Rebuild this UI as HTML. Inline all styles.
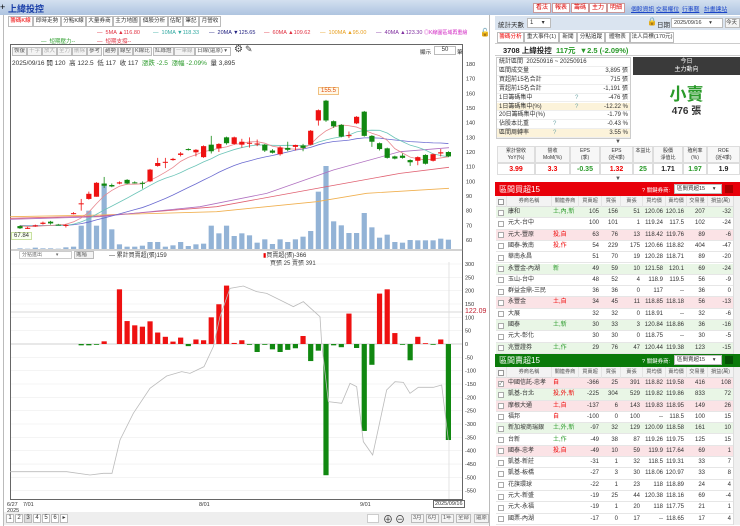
<!DOCTYPE html>
<html><head><meta charset="utf-8">
<style>
*{margin:0;padding:0;box-sizing:border-box}
body{width:740px;height:526px;overflow:hidden;background:#fff;font-family:"Liberation Sans","Noto Sans CJK TC",sans-serif;font-size:7px;color:#333;position:relative}
.a{position:absolute;white-space:nowrap}
.tab{position:absolute;top:16px;height:11px;border:1px solid #bbb;background:#fff;font-size:5.6px;line-height:9px;padding:0;color:#333;text-align:center;white-space:nowrap;overflow:hidden}
.btn{position:absolute;height:9px;border:1px solid #bbb;background:#f4f4f4;font-size:5.5px;line-height:7px;padding:0 1px;color:#555;white-space:nowrap;overflow:hidden}
.rb{position:absolute;top:3px;height:10px;border:1px solid #c99;background:#fff;color:#d00;font-size:6px;line-height:8px;padding:0 2px}
.lk{position:absolute;top:4px;color:#1a44c8;text-decoration:underline;font-size:5.8px;white-space:nowrap}
.cell{position:absolute;font-size:6px;line-height:11px;height:11px;white-space:nowrap;overflow:hidden}
</style></head><body>
<div class="a" style="left:0;top:0;width:740px;height:15px;background:linear-gradient(#d3e0f0,#aec4e0)"></div>
<div class="a" style="left:0;top:2px;font-size:9px;color:#000">+</div>
<div class="a" style="left:8px;top:2px;font-size:9px;color:#1a3fa8;font-weight:bold">上緯投控</div>
<div class="a" style="left:3px;top:15px;width:1px;height:511px;background:#bbb"></div>
<div class="a" style="left:489px;top:15px;width:1px;height:511px;background:#bbb"></div>
<div class="tab" style="left:8px;width:25px;color:#e00">籌碼K線</div>
<div class="tab" style="left:33px;width:28px">即時走勢</div>
<div class="tab" style="left:61px;width:25px">分點K線</div>
<div class="tab" style="left:86px;width:27px">大量券商</div>
<div class="tab" style="left:113px;width:27px">主力地圖</div>
<div class="tab" style="left:140px;width:28px">個股分析</div>
<div class="tab" style="left:168px;width:15px">估配</div>
<div class="tab" style="left:183px;width:16px">筆記</div>
<div class="tab" style="left:199px;width:22px">月營收</div>
<div class="a" style="left:97px;top:30px;font-size:5.5px;color:#e03040">— &nbsp;5MA ▲116.80</div>
<div class="a" style="left:153px;top:30px;font-size:5.5px;color:#30a8a0">— &nbsp;10MA ▼118.33</div>
<div class="a" style="left:209px;top:30px;font-size:5.5px;color:#202080">— &nbsp;20MA ▼125.65</div>
<div class="a" style="left:264px;top:30px;font-size:5.5px;color:#e03040">— &nbsp;60MA ▲109.62</div>
<div class="a" style="left:320px;top:30px;font-size:5.5px;color:#e8a020">— &nbsp;100MA ▲95.00</div>
<div class="a" style="left:376px;top:30px;font-size:5.5px;color:#8030a0">— &nbsp;40MA ▲123.30</div>
<div class="a" style="left:424px;top:29px;font-size:5px;color:#d020c0">◎K線圖區域再重繪</div>
<div class="a" style="left:480px;top:28px;font-size:8px;color:#000">🔓</div>
<div class="a" style="left:41px;top:37px;font-size:5.5px;color:#30a030">— &nbsp;短期壓力--</div>
<div class="a" style="left:97px;top:37px;font-size:5.5px;color:#e03040">— &nbsp;短期支撐--</div>
<div class="a" style="left:10px;top:44px;width:453px;height:456px;border:1px solid #666"></div>
<div class="btn" style="left:12px;top:47px">恢復</div>
<div class="btn" style="left:27px;top:47px;color:#aaa">十字</div>
<div class="btn" style="left:42px;top:47px;color:#aaa">放大</div>
<div class="btn" style="left:57px;top:47px;color:#aaa">全力</div>
<div class="btn" style="left:72px;top:47px;color:#aaa">刪除</div>
<div class="btn" style="left:87px;top:47px">參考</div>
<div class="btn" style="left:103px;top:47px">趨勢</div>
<div class="btn" style="left:118px;top:47px">線型</div>
<div class="btn" style="left:133px;top:47px">K線比</div>
<div class="btn" style="left:153px;top:47px">紅綠燈</div>
<div class="btn" style="left:174px;top:47px;color:#aaa">一筆線</div>
<div class="btn" style="left:195px;top:47px;width:36px;background:#fff">日線(還原) ▾</div>
<div class="a" style="left:234px;top:44px;font-size:10px;color:#444">⚙</div>
<div class="a" style="left:245px;top:44px;font-size:9px;color:#444">✎</div>
<div class="a" style="left:420px;top:48px;font-size:5.5px">顯示</div>
<div class="a" style="left:434px;top:46px;width:22px;height:9px;border:1px solid #bbb;font-size:6px;text-align:center;line-height:7px">50</div>
<div class="a" style="left:457px;top:48px;font-size:5.5px">筆</div>
<div class="a" style="left:12px;top:57px;font-size:6.5px;color:#333">2025/09/16 開 120 &nbsp;高 122.5 &nbsp;低 117 &nbsp;收 117 &nbsp;<span style="color:#2a9a2a">漲跌 -2.5 &nbsp;漲幅 -2.09%</span> &nbsp;量 3,895</div>
<div class="a" style="left:318px;top:87px;border:1px solid #f0c080;background:#fff8e8;color:#e05010;font-size:6px;padding:0 2px">155.5</div>
<div class="a" style="left:11px;top:232px;border:1px solid #c8e0a0;background:#f8fff0;color:#333;font-size:6px;padding:0 2px">67.84</div>
<div class="a" style="left:19px;top:251px;width:53px;height:8px;border:1px solid #ccc;font-size:5px;line-height:6px;color:#666;padding-left:2px;overflow:hidden">分點進出 &nbsp; &nbsp; &nbsp; &nbsp; &nbsp;▾</div>
<div class="btn" style="left:74px;top:251px;width:20px;height:8px">進階</div>
<div class="a" style="left:109px;top:250px;font-size:6px">— 累計買賣超(張)159</div>
<div class="a" style="left:263px;top:250px;font-size:6px"><span style="color:#e00">▮</span>買賣超(張)-366</div>
<div class="a" style="left:270px;top:258px;font-size:6px">買張 25 賣張 391</div>
<div class="a" style="left:465px;top:308px;font-size:7px;color:#c02030">122.09</div>
<div class="a" style="left:7px;top:502px;font-size:5.5px">6/27</div>
<div class="a" style="left:7px;top:508px;font-size:5.5px">2025</div>
<div class="a" style="left:23px;top:502px;font-size:5.5px">7/01</div>
<div class="a" style="left:199px;top:502px;font-size:5.5px">8/01</div>
<div class="a" style="left:360px;top:502px;font-size:5.5px">9/01</div>
<div class="a" style="left:433px;top:500px;font-size:5.5px;border:1px solid #666;background:#fff;padding:0 1px">2025/09/16</div>
<div class="a" style="left:4px;top:512px;width:485px;height:13px;background:#eee"></div>
<div id="pg"></div>
<div class="a" style="left:367px;top:514px;width:12px;height:9px;background:#fff;border:1px solid #ccc"></div>
<div class="a" style="left:383px;top:511px;font-size:10px;color:#333">⊕</div>
<div class="a" style="left:395px;top:511px;font-size:10px;color:#333">⊖</div>
<div class="btn" style="left:411px;top:514px">3月</div>
<div class="btn" style="left:426px;top:514px">6月</div>
<div class="btn" style="left:441px;top:514px">1年</div>
<div class="btn" style="left:456px;top:514px">全部</div>
<div class="btn" style="left:474px;top:514px">還原</div>
<svg id="ch" class="a" style="left:0;top:0" width="490" height="526"></svg>

<div class="rb" style="left:533px">看法</div>
<div class="rb" style="left:552px">報表</div>
<div class="rb" style="left:571px">籌碼</div>
<div class="rb" style="left:589px">主力</div>
<div class="rb" style="left:607px">明細</div>
<div class="lk" style="left:631px">個股資訊</div>
<div class="lk" style="left:656px">交易權位</div>
<div class="lk" style="left:682px">行事曆</div>
<div class="lk" style="left:704px">計畫達站</div>
<div class="a" style="left:495px;top:16px;width:245px;height:14px;background:#dae4f0"></div>
<div class="a" style="left:498px;top:19px;font-size:6.5px">統計天數</div>
<div class="a" style="left:527px;top:18px;width:24px;height:10px;background:#fff;border:1px solid #bbb;font-size:6px;padding-left:2px">1 &nbsp; &nbsp; ▾</div>
<div class="a" style="left:647px;top:17px;font-size:8px">🔒</div>
<div class="a" style="left:657px;top:19px;font-size:6.5px">日期</div>
<div class="a" style="left:671px;top:18px;width:52px;height:10px;background:#fff;border:1px solid #bbb;font-size:5.5px;padding-left:2px;line-height:8px;overflow:hidden">2025/09/16 &nbsp; &nbsp; ▾</div>
<div class="a" style="left:725px;top:18px;width:15px;height:10px;background:#f4f4f4;border:1px solid #bbb;font-size:5.5px;line-height:8px">今天</div>
<div class="tab" style="left:497px;top:32px;width:27px;color:#e00">籌碼分析</div>
<div class="tab" style="left:524px;top:32px;width:35px">重大事件(1)</div>
<div class="tab" style="left:559px;top:32px;width:18px">新聞</div>
<div class="tab" style="left:577px;top:32px;width:28px">分點追蹤</div>
<div class="tab" style="left:605px;top:32px;width:25px">體物表</div>
<div class="tab" style="left:630px;top:32px;width:44px">法人目標(170元)</div>
<div class="a" style="left:495px;top:43px;width:245px;height:13px;border-top:1px solid #ccc;border-bottom:1px solid #ccc"></div>
<div class="a" style="left:503px;top:45px;font-size:7.5px;font-weight:bold;color:#222">3708 上緯投控 &nbsp;<span style="color:#2a9a2a">117元 &nbsp;▼2.5 (-2.09%)</span></div>
<div class="a" style="left:496px;top:57px;width:135px;height:82px;border:1px solid #ccc"></div>
<div id="st"></div>
<div class="a" style="left:633px;top:57px;width:107px;height:18px;background:#3a3a3a;color:#fff;font-size:6px;text-align:center;line-height:8px;padding-top:1px">今日<br>主力動向</div>
<div class="a" style="left:633px;top:80px;width:107px;text-align:center;font-size:17px;color:#2a9a2a;font-weight:bold">小賣</div>
<div class="a" style="left:633px;top:102px;width:107px;text-align:center;font-size:10px;color:#333;font-weight:bold">476 張</div>
<div class="a" style="left:615px;top:139px;font-size:6px;color:#555">▼</div>
<div id="mt"></div>
<div class="a" style="left:615px;top:176px;font-size:6px;color:#555">▼</div>
<div class="a" style="left:495px;top:182px;width:245px;height:14px;background:#e8000a"></div>
<div class="a" style="left:499px;top:184px;font-size:8px;color:#fff">區間買超15</div>
<div class="a" style="left:642px;top:186px;font-size:5.5px;color:#fff">? 關鍵券商:</div>
<div class="a" style="left:674px;top:184px;width:48px;height:10px;background:#fff;border:1px solid #bbb;font-size:5.5px;line-height:8px;padding-left:2px;overflow:hidden">區間買超15 &nbsp; &nbsp; ▾</div>
<div class="a" style="left:725px;top:185px;width:8px;height:8px;background:#a00"></div>
<div class="a" style="left:495px;top:354px;width:245px;height:13px;background:#0a7a0a"></div>
<div class="a" style="left:499px;top:355px;font-size:8px;color:#fff">區間賣超15</div>
<div class="a" style="left:642px;top:357px;font-size:5.5px;color:#fff">? 關鍵券商:</div>
<div class="a" style="left:674px;top:355px;width:48px;height:10px;background:#fff;border:1px solid #bbb;font-size:5.5px;line-height:8px;padding-left:2px;overflow:hidden">區間賣超15 &nbsp; &nbsp; ▾</div>
<div class="a" style="left:725px;top:356px;width:8px;height:8px;background:#065006"></div>
<div id="tb"></div>
<script>
const NS="http://www.w3.org/2000/svg",svg=document.getElementById('ch');
function el(t,a){const e=document.createElementNS(NS,t);for(const k in a)e.setAttribute(k,a[k]);svg.appendChild(e);return e}
function tx(x,y,s,c,sz){const e=el('text',{x:x,y:y,fill:c||'#333','font-size':sz||5.5,'font-family':'Liberation Sans'});e.textContent=s}
const py=p=>64+(180-p)*1.4667, xi=i=>20+i*7.65;
for(let p=180;p>=60;p-=10)tx(466,py(p)+2,p);
el('line',{x1:10,y1:250,x2:463,y2:250,stroke:'#888','stroke-width':0.8});
const C=[[69.5,68,70,67.5],[68,68.3,69,67.5],[69.5,70,70.5,69],[71,71.8,72.5,70.5],[72.5,71.3,73,70.5],[70.5,70.3,71,70],[70,70.3,71,68.5],[78,78.3,79,77.5],[84.5,85,88,80],[88,91.5,93,87.5],[89.5,99,99.5,89.5],[98.5,97,103,95.5],[97.5,96.5,98.5,96],[98.5,99.3,100,98],[101,98.5,101.5,98],[99.3,99,100,98.5],[99,98.3,100,95],[100,108,108.5,99.5],[110.5,112.5,116,110],[112.8,113.3,116,109],[114.5,115.3,116,114],[118,119,120,117],[122,121.5,122.5,121],[119.8,121.5,122,117],[116.5,124,124.5,116],[125,120.5,131,119],[122.5,125.5,126,120],[130,126,130.5,125],[125.5,130,130.5,125],[125,127,129,123],[126,126.3,130,123],[125.5,125.8,128.5,124],[125,121,125.5,120],[121,119.5,122,119],[118.5,123,124,117.5],[122.8,121.5,127,120.5],[123.5,124.8,125,121],[124.5,122.8,125.5,120.5],[125,134.5,135,124.5],[141.5,148.5,149,138],[155,141.5,155.5,140.5],[141,137.5,141.5,136.5],[138.5,130.5,139,130],[131,131.5,134,129.5],[139.5,144,144.5,139],[147.5,131,148,130.5],[131,127,131.5,123.5],[126,122,126.5,121],[122.5,116,123,115.5],[117,115.5,117.5,115],[117.5,116,119,115.5],[114.5,113,115,110.5],[114,116.5,117,111],[118,112,118.5,111.5],[114,118.5,119,113.5],[119,119.8,122,117],[120,117,120.5,116.5]];
const V=[565,566,563,565,565,566,562,560,497,452,497,372,508,553,560,560,557,546,546,560,556,546,558,553,551,497,520,497,528,520,526,548,538,552,538,546,538,530,513,395,318,484,496,519,519,459,502,533,524,546,548,540,541,541,541,536,539];
V.forEach((v,i)=>{const t=60+v/3;el('rect',{x:xi(i)-2.6,y:t,width:5.2,height:249-t,fill:'#93b3d6'})});
function pl(pts,c){el('polyline',{points:pts.map(p=>(p[0]/3)+','+(60+p[1]/3)).join(' '),fill:'none',stroke:c,'stroke-width':0.8})}
pl([[30,470],[300,465],[650,455],[950,425],[1100,400],[1347,385]],'#f0b050');
pl([[30,475],[300,468],[650,440],[980,380],[1200,340],[1347,322]],'#e06070');
pl([[30,478],[300,470],[600,440],[800,400],[1000,330],[1200,275],[1347,263]],'#b070c0');
const cl=C.map(c=>c[1]),pad=Array(25).fill(70);
function ma(n,c){const a=pad.concat(cl);const pts=[];for(let i=0;i<cl.length;i++){let s=0;for(let j=0;j<n;j++)s+=a[25+i-j];pts.push(xi(i)+','+py(s/n))}el('polyline',{points:pts.join(' '),fill:'none',stroke:c,'stroke-width':0.8})}
ma(20,'#6a6ad0');ma(10,'#6cc4b8');ma(5,'#e8888f');
C.forEach((c,i)=>{const x=xi(i),up=c[1]>=c[0],col=up?'#ee1111':'#118811';el('line',{x1:x,x2:x,y1:py(c[2]),y2:py(c[3]),stroke:col,'stroke-width':0.8});const t=py(Math.max(c[0],c[1])),b=py(Math.min(c[0],c[1]));el('rect',{x:x-2.6,y:t,width:5.2,height:Math.max(b-t,1),fill:col})});
for(let v=300;v>=-550;v-=50){const y=344-v*0.2667;el('line',{x1:11,x2:462,y1:y,y2:y,stroke:'#eee','stroke-width':0.6});tx(465,y+2,v)}
el('line',{x1:11,x2:462,y1:344,y2:344,stroke:'#aaa','stroke-width':0.6});
el('line',{x1:11,x2:462,y1:312,y2:312,stroke:'#ccc','stroke-width':0.8});
el('line',{x1:449,x2:449,y1:262,y2:499,stroke:'#ddd','stroke-width':0.8});
const L=[0,0,0,0,0,0,0,0,-5,-5,-2,10,0,205,86,70,65,85,43,27,9,24,-8,17,14,100,149,219,4,14,-1,-30,-1,-20,-30,-22,-16,30,-64,-25,-492,-5,-12,114,-15,-326,-78,189,205,41,-2,-61,27,3,-1,17,-360];
L.forEach((v,i)=>{if(!v)return;const h=Math.abs(v)*0.2667;el('rect',{x:xi(i)-2.6,y:v>0?344-h:344,width:5.2,height:Math.max(h,0.8),fill:v>0?'#ee1111':'#118811'})});
const G=[[30,665],[200,665],[270,675],[310,670],[336,670],[360,570],[400,490],[450,415],[500,378],[545,365],[570,370],[612,350],[640,290],[660,200],[690,115],[730,108],[770,125],[800,130],[850,155],[880,170],[910,155],[960,200],[965,280],[985,455],[1025,460],[1050,400],[1070,410],[1090,575],[1118,615],[1160,420],[1185,395],[1210,397],[1230,430],[1255,412],[1300,412],[1325,405],[1345,570]];
el('polyline',{points:G.map(p=>(p[0]/3)+','+(250+p[1]/3)).join(' '),fill:'none',stroke:'#bbb','stroke-width':0.8});
let h='';['1','2','3','4','5','6','▸'].forEach((s,i)=>{h+=`<div class="a" style="left:${6+i*9}px;top:514px;width:8px;height:9px;border:1px solid #bbb;background:${i==2?'#ddd':'#fff'};font-size:6px;text-align:center;line-height:7px">${s}</div>`});
document.getElementById('pg').innerHTML=h;
const S=[['統計區間 &nbsp;20250916 ~ 20250916','',''],['區間成交量','','3,895 張'],['買超前15名合計','','715 張'],['賣超前15名合計','','-1,191 張'],['1日籌碼集中','?','-476 張'],['1日籌碼集中(%)','?','-12.22 %'],['20日籌碼集中(%)','','-1.79 %'],['佔股本比重','?','-0.43 %'],['區間周轉率','?','3.55 %']];
h='';S.forEach((r,i)=>{const y=58+i*8.9,bg=(i==5||i==8)?'#fcf3da':'#fff';h+=`<div class="a" style="left:497px;top:${y}px;width:133px;height:8.9px;background:${bg};border-bottom:1px solid #eee"></div><div class="a" style="left:499px;top:${y}px;font-size:6px;line-height:9px">${r[0]}</div><div class="a" style="left:${i==5||i==4?575:553}px;top:${y}px;font-size:6px;line-height:9px;color:#7aa">${r[1]}</div><div class="a" style="left:580px;width:48px;text-align:right;top:${y}px;font-size:6px;line-height:9px">${r[2]}</div>`});
document.getElementById('st').innerHTML=h;
const MX=[497,535,570,600,633,653,683,707,740],MH=['累計營收<br>YoY(%)','營收<br>MoM(%)','EPS<br>(季)','EPS<br>(近4季)','本益比','股價<br>淨值比','殖利率<br>(%)','ROE<br>(近4季)'],MV=[['3.99','#e00'],['3.3','#e00'],['-0.35','#2a9a2a'],['1.32','#e00'],['25','#2a9a2a'],['1.71','#222'],['1.97','#2a9a2a'],['1.9','#222']];
h='';for(let i=0;i<8;i++){const w=MX[i+1]-MX[i];h+=`<div class="a" style="left:${MX[i]}px;top:146px;width:${w}px;height:17px;border:1px solid #ddd;background:#f7f7f7;font-size:5px;line-height:7px;text-align:center;padding-top:1px">${MH[i]}</div><div class="a" style="left:${MX[i]}px;top:163px;width:${w}px;height:12px;border:1px solid #ddd;font-size:7px;font-weight:bold;line-height:11px;text-align:center;color:${MV[i][1]}">${MV[i][0]}</div>`}
document.getElementById('mt').innerHTML=h;
const CX=[497,506,551,578,601,620,642,665,686,707,733],HD=['','券商名稱','關連券商','買賣超','買張','賣張','買均價','賣均價','交易量','損益(萬)'];
const T1=[['康和','土,內,新',105,156,51,'120.06','120.16',207,-32,'g'],['元大-台中','',100,101,1,'119.24','117.5',102,-24,'w'],['元大-豐原','投,自',63,76,13,'118.42','119.76',89,-6,'p'],['國泰-敦南','投,作',54,229,175,'120.66','118.82',404,-47,'w'],['華南永昌','',51,70,19,'120.28','118.71',89,-20,'w'],['永豐金-內湖','新',49,59,10,'121.58','120.1',69,-24,'g'],['玉山-台中','',48,52,4,'118.9','119.5',56,-9,'w'],['群益金鼎-三民','',36,36,0,'117','--',36,0,'w'],['永豐金','土,自',34,45,11,'118.85','118.18',56,-13,'p'],['大展','',32,32,0,'118.91','--',32,-6,'w'],['國泰','土,新',30,33,3,'120.84','118.86',36,-16,'g'],['元大-彰化','',30,30,0,'118.75','--',30,-5,'w'],['兆豐證券','土,作',29,76,47,'120.44','119.38',123,-15,'g']];
const T2=[['中國信託-忠孝','自',-366,25,391,'118.82','119.58',416,108,'p'],['凱基-台北','投,外,新',-225,304,529,'119.82','119.86',833,72,'g'],['摩根大通','土,自',-137,6,143,'119.83','118.95',149,26,'p'],['福邦','自',-100,0,100,'--','118.5',100,15,'w'],['新加坡商瑞銀','土,外,新',-97,32,129,'120.09','118.58',161,10,'g'],['台新','土,作',-49,38,87,'119.26','119.75',125,15,'w'],['國泰-忠孝','投,自',-49,10,59,'119.9','117.64',69,1,'p'],['凱基-新莊','',-31,1,32,'118.5','119.31',33,7,'w'],['凱基-板橋','',-27,3,30,'118.06','120.97',33,8,'w'],['花旗環球','',-22,1,23,'118','118.89',24,4,'w'],['元大-新盛','',-19,25,44,'120.38','118.16',69,-4,'w'],['元大-永福','',-19,1,20,'118','117.75',21,1,'w'],['國票-內湖','',-17,0,17,'--','118.65',17,4,'w']];
h='';
function tbl(top,rows,first){h+=`<div class="a" style="left:496px;top:${top}px;width:237px;height:11px;background:#f3f3f3;border-bottom:1px solid #ddd"></div>`;
for(let c=1;c<10;c++)h+=`<div class="cell" style="left:${CX[c]}px;top:${top}px;width:${CX[c+1]-CX[c]}px;text-align:center;color:#555;font-size:5.2px;border-left:1px solid #e4e4e4">${HD[c]}</div>`;
h+=`<div class="a" style="left:498px;top:${top+3}px;width:6px;height:6px;border:1px solid #999;background:#fff"></div>`;
rows.forEach((r,i)=>{const y=top+11+i*11.3,bg=r[9]=='g'?'#e9f6e6':r[9]=='p'?'#fbe3e6':'#fff';
h+=`<div class="a" style="left:496px;top:${y}px;width:237px;height:11.3px;background:${bg};border-bottom:1px solid #e6e6e6"></div><div class="a" style="left:498px;top:${y+2.5}px;width:6px;height:6px;border:1px solid #aaa;background:#fff;font-size:5px;line-height:5px">${first&&i==0?'✓':''}</div>`;
const rc=/[投自]/.test(r[1])?'#e00':'#2a9a2a';
h+=`<div class="cell" style="left:508px;top:${y}px;width:43px">${r[0]}</div><div class="cell" style="left:553px;top:${y}px;width:25px;color:${rc}">${r[1]}</div>`;
for(let c=2;c<9;c++)h+=`<div class="cell" style="left:${CX[c+1]}px;top:${y}px;width:${CX[c+2]-CX[c+1]-2}px;text-align:right">${r[c]}</div>`});
h+=`<div class="a" style="left:733px;top:${top}px;width:7px;height:${11+rows.length*11.3}px;background:#f0f0f0;border-left:1px solid #ddd"></div>`}
tbl(196,T1,false);tbl(367,T2,true);
document.getElementById('tb').innerHTML=h;
</script>
</body></html>
